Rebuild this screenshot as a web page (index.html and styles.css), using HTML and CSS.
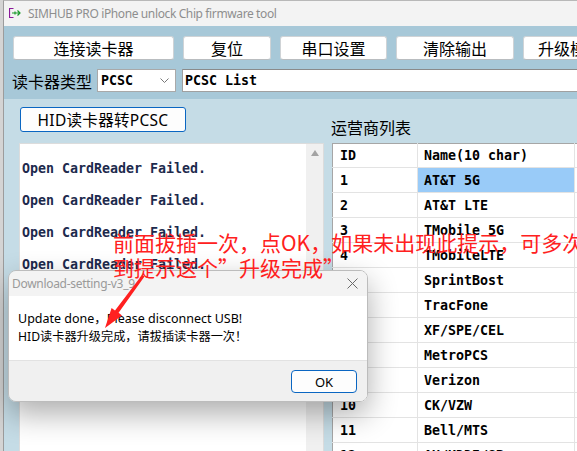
FILE: index.html
```html
<!DOCTYPE html>
<html lang="zh">
<head>
<meta charset="utf-8">
<title>SIMHUB PRO</title>
<link rel="stylesheet" href="styles.css">
</head>
<body>
<div class="desk">
  <div class="win">
    <div class="titlebar">
      <svg class="appicon" width="12" height="10" viewBox="0 0 12 10">
        <path d="M4.5 0.5 H0.5 V9.5 H4.5" fill="none" stroke="#8a1a9a" stroke-width="1.2"/>
        <path d="M3 5 H11 M8.5 2.5 L11 5 L8.5 7.5 M6 3.5 V6.5" fill="none" stroke="#1a9a2a" stroke-width="1.2"/>
      </svg>
      <span class="wintitle">SIMHUB PRO iPhone unlock Chip firmware tool</span>
    </div>
    <div class="band">
      <div class="btnrow">
        <button class="tbtn w1">连接读卡器</button>
        <button class="tbtn w2">复位</button>
        <button class="tbtn w3">串口设置</button>
        <button class="tbtn w4">清除输出</button>
        <button class="tbtn w5">升级模块</button>
      </div>
      <div class="typerow">
        <span class="typelabel">读卡器类型</span>
        <div class="combo"><span class="mono">PCSC</span>
          <svg class="chev" width="9" height="5" viewBox="0 0 9 5"><path d="M0.5 0.5 L4.5 4.5 L8.5 0.5" fill="none" stroke="#777" stroke-width="1"/></svg>
        </div>
        <div class="field"><span class="mono">PCSC List</span></div>
      </div>
    </div>
    <div class="main">
      <div class="leftcol">
        <button class="hidbtn">HID读卡器转PCSC</button>
        <div class="output">
          <div class="outtext mono">
            <div class="line">Open CardReader Failed.</div>
            <div class="line">Open CardReader Failed.</div>
            <div class="line">Open CardReader Failed.</div>
            <div class="line">Open CardReader Failed.</div>
          </div>
          <div class="vscroll"><span class="uparrow"></span></div>
        </div>
      </div>
      <div class="rightcol">
        <div class="listlabel">运营商列表</div>
        <table class="grid mono">
          <colgroup><col class="cid"><col class="cname"><col class="cext"></colgroup>
          <tr class="head"><td>ID</td><td>Name(10 char)</td><td></td></tr>
          <tr><td>1</td><td class="sel">AT&amp;T 5G</td><td></td></tr>
          <tr><td>2</td><td>AT&amp;T LTE</td><td></td></tr>
          <tr><td>3</td><td>TMobile 5G</td><td></td></tr>
          <tr><td>4</td><td>TMobileLTE</td><td></td></tr>
          <tr><td>5</td><td>SprintBost</td><td></td></tr>
          <tr><td>6</td><td>TracFone</td><td></td></tr>
          <tr><td>7</td><td>XF/SPE/CEL</td><td></td></tr>
          <tr><td>8</td><td>MetroPCS</td><td></td></tr>
          <tr><td>9</td><td>Verizon</td><td></td></tr>
          <tr><td>10</td><td>CK/VZW</td><td></td></tr>
          <tr><td>11</td><td>Bell/MTS</td><td></td></tr>
          <tr><td>12</td><td>AU/KDDI/SB</td><td></td></tr>
        </table>
      </div>
    </div>
  </div>

  <div class="dialog">
    <div class="dlgtitle">
      <span>Download-setting-v3_9</span>
      <svg class="dlgclose" width="11" height="11" viewBox="0 0 11 11"><path d="M0.5 0.5 L10.5 10.5 M10.5 0.5 L0.5 10.5" stroke="#6a6a6a" stroke-width="1"/></svg>
    </div>
    <div class="dlgbody">
      <div>Update done，Please disconnect USB!</div>
      <div class="zh">HID读卡器升级完成，请拔插读卡器一次！</div>
    </div>
    <div class="dlgfoot"><button class="okbtn">OK</button></div>
  </div>

  <div class="note">
    <div>前面拔插一次，点OK，如果未出现此提示，可多次</div>
    <div>到提示这个”升级完成”</div>
  </div>
  <svg class="arrow" width="577" height="451" viewBox="0 0 577 451">
    <polygon points="142,275 144.5,276.5 118.6,312.8 122,315.5 105,328 111.6,308 115,310.4" fill="#ff2020"/>
  </svg>
</div>
</body>
</html>
```

FILE: styles.css
```css
* { box-sizing: border-box; }
html, body { margin: 0; padding: 0; }
body {
  width: 577px;
  height: 451px;
  overflow: hidden;
  background: #d4d4d4;
  font-family: "Noto Sans", "Noto Sans CJK SC", sans-serif;
}
.desk {
  position: relative;
  width: 577px;
  height: 451px;
  overflow: hidden;
}
.win {
  margin-left: 3px;
  width: 640px;
  height: 451px;
  border-left: 1px solid #9c9c9c;
  border-top: 1px solid #b8b8b8;
  background: #c5dce6;
}
.titlebar {
  height: 25px;
  background: #f3f3f3;
  display: flex;
  align-items: center;
  padding-left: 5px;
}
.appicon { margin-right: 7px; margin-top: -2px; }
.wintitle {
  font-family: "Noto Sans", sans-serif;
  font-size: 12px;
  color: #8e8e8e;
  letter-spacing: -0.38px;
}
.band {
  background: #a7c8d8;
  height: 73px;
  padding: 10px 0 0 8px;
}
.btnrow { display: flex; gap: 9px; margin-left: 1px; }
.tbtn {
  height: 24px;
  padding: 0;
  background: #fff;
  border: 1px solid #cfd3d6;
  border-bottom-color: #b9bdc0;
  border-radius: 3px;
  font-family: "Noto Sans CJK SC", sans-serif;
  font-size: 16px;
  line-height: 22px;
  color: #000;
  white-space: nowrap;
  overflow: hidden;
}
.w1 { width: 161px; }
.w2 { width: 88px; }
.w3 { width: 107px; }
.w4 { width: 118px; }
.w5 { width: 94px; }
.typerow {
  display: flex;
  align-items: center;
  margin-top: 9px;
  height: 23px;
}
.typelabel {
  font-family: "Noto Sans CJK SC", sans-serif;
  font-size: 16px;
  color: #000;
  width: 85px;
}
.combo {
  width: 79px;
  height: 23px;
  background: #fff;
  border: 1px solid #a9a9a9;
  display: flex;
  align-items: center;
  justify-content: space-between;
  padding: 0 6px 0 3px;
}
.field {
  margin-left: 6px;
  width: 420px;
  height: 23px;
  background: #fff;
  border: 1px solid #a0a0a0;
  border-top-color: #8a8a8a;
  display: flex;
  align-items: center;
  padding-left: 2px;
}
.mono {
  font-family: "DejaVu Sans Mono", monospace;
  font-weight: bold;
  font-size: 13.3px;
  color: #000;
}
.main {
  display: flex;
  align-items: flex-start;
  padding-top: 8px;
}
.leftcol {
  margin-left: 15px;
  width: 305px;
}
.hidbtn {
  display: block;
  margin-left: 1px;
  width: 166px;
  height: 25px;
  padding: 0;
  background: #fdfdfd;
  border: 1px solid #0a66c2;
  border-radius: 3px;
  font-family: "Noto Sans", "Noto Sans CJK SC", sans-serif;
  font-size: 15.5px;
  letter-spacing: 0.3px;
  line-height: 22px;
  color: #000;
}
.output {
  margin-top: 11px;
  height: 320px;
  background: #fff;
  border: 1px solid #dcdcdc;
  display: flex;
}
.outtext {
  flex: 1;
  padding: 9px 0 0 2px;
  color: #1d2a4d;
}
.outtext .line { line-height: 32px; height: 32px; color: #1d2a4d; }
.vscroll {
  width: 17px;
  background: #f0f0f0;
  display: flex;
  justify-content: center;
}
.uparrow {
  margin-top: 6px;
  width: 0;
  height: 0;
  border-left: 4px solid transparent;
  border-right: 4px solid transparent;
  border-bottom: 6px solid #a3a3a3;
}
.rightcol {
  margin-left: 8px;
  margin-top: 10px;
}
.listlabel {
  font-family: "Noto Sans CJK SC", sans-serif;
  font-size: 16px;
  line-height: 20px;
  height: 20px;
  color: #000;
  margin-left: -1px;
}
.grid {
  margin-top: 6px;
  border-collapse: collapse;
  table-layout: fixed;
  width: 300px;
  background: #fff;
  border-top: 1px solid #a6a6a6;
  border-left: 1px solid #a6a6a6;
}
.cid { width: 85px; }
.cname { width: 157px; }
.cext { width: 58px; }
.grid td {
  height: 25px;
  padding: 0 0 0 6px;
  border-right: 1px solid #e3e3e3;
  border-bottom: 1px solid #e3e3e3;
  white-space: nowrap;
  overflow: hidden;
}
.grid td:first-child { padding-left: 7px; }
.grid tr.head td { height: 24px; }
.grid td.sel { background: #99cbf8; }
.dialog {
  position: absolute;
  left: 8px;
  top: 270px;
  width: 360px;
  height: 132px;
  border: 1px solid #bcbcbc;
  border-radius: 8px;
  overflow: hidden;
  box-shadow: 0 12px 30px rgba(0, 0, 0, 0.32);
  display: flex;
  flex-direction: column;
}
.dlgtitle {
  height: 25px;
  background: #f3f3f3;
  display: flex;
  align-items: center;
  justify-content: space-between;
  padding: 0 9px 0 3px;
  font-family: "Noto Sans", sans-serif;
  font-size: 12px;
  color: #9a9a9a;
  letter-spacing: -0.3px;
}
.dlgbody {
  height: 64px;
  background: #fff;
  padding: 14px 0 0 9px;
  font-family: "Noto Sans", "Noto Sans CJK SC", sans-serif;
  font-size: 12.5px;
  line-height: 18px;
  color: #000;
}
.dlgbody .zh { font-size: 12.2px; }
.dlgfoot {
  flex: 1;
  background: #f0f0f0;
  border-top: 1px solid #e2e2e2;
  display: flex;
  justify-content: flex-end;
  align-items: flex-start;
  padding: 9px 10px 0 0;
}
.okbtn {
  width: 66px;
  height: 23px;
  padding: 0;
  background: #fdfdfd;
  border: 1px solid #0a66c2;
  border-radius: 4px;
  font-family: "Noto Sans", sans-serif;
  font-size: 13px;
  color: #000;
}
.note {
  position: absolute;
  left: 113px;
  top: 230px;
  white-space: nowrap;
  font-family: "Noto Sans CJK SC", sans-serif;
  font-size: 21px;
  line-height: 25px;
  color: #ff2020;
}
.arrow {
  position: absolute;
  left: 0;
  top: 0;
}
```
